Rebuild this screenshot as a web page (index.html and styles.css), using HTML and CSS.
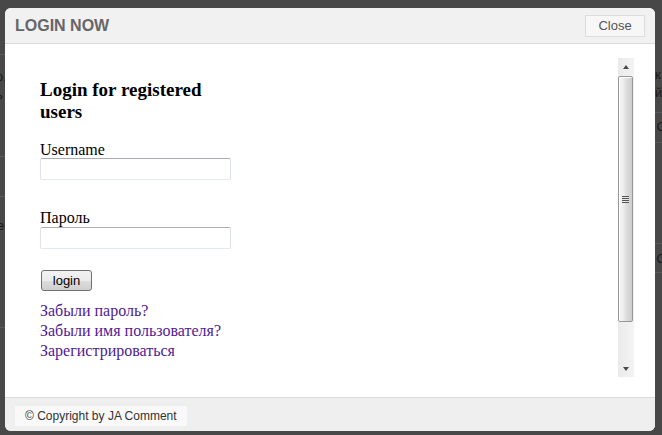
FILE: index.html
```html
<!DOCTYPE html>
<html lang="ru">
<head>
<meta charset="utf-8">
<title>Login now</title>
<link rel="stylesheet" href="styles.css">
</head>
<body>
<div class="page">
  <div class="page-col">
    <div class="prow prow-a"></div>
    <div class="ptext ptext-left">о,<br>ь</div>
    <div class="prow prow-b"></div>
    <div class="prow prow-c"></div>
    <div class="ptext ptext-left2">е</div>
    <div class="prow prow-d"></div>
  </div>
  <div class="page-col">
    <div class="prow prow-e"></div>
    <div class="ptext ptext-right">к<br>й"</div>
    <div class="prow prow-f"></div>
    <div class="ptext ptext-right2">C</div>
    <div class="prow prow-g"></div>
    <div class="prow prow-h"></div>
    <div class="ptext ptext-right3">C</div>
    <div class="prow prow-i"></div>
  </div>
</div>

<div class="modal">
  <div class="modal-header">
    <h2 class="modal-title">LOGIN NOW</h2>
    <button class="close-btn" type="button">Close</button>
  </div>
  <div class="modal-body">
    <div class="frame">
      <div class="frame-content">
        <h3 class="login-title">Login for registered users</h3>
        <form class="login-form">
          <label class="field-label" for="u">Username</label>
          <input class="field-input" id="u" type="text">
          <label class="field-label field-label-2" for="p">Пароль</label>
          <input class="field-input field-input-2" id="p" type="password">
          <button class="login-btn" type="button">login</button>
        </form>
        <ul class="links">
          <li><a href="#r">Забыли пароль?</a></li>
          <li><a href="#r">Забыли имя пользователя?</a></li>
          <li><a href="#r">Зарегистрироваться</a></li>
        </ul>
      </div>
      <div class="scrollbar">
        <div class="sb-btn sb-up"><span class="tri-up"></span></div>
        <div class="sb-thumb"><span class="grip"></span></div>
        <div class="sb-track"></div>
        <div class="sb-btn sb-down"><span class="tri-down"></span></div>
      </div>
    </div>
  </div>
  <div class="modal-footer">
    <span class="copyright">© Copyright by JA Comment</span>
  </div>
</div>
</body>
</html>
```

FILE: styles.css
```css
html, body {
  margin: 0;
  padding: 0;
}
body {
  width: 662px;
  height: 435px;
  overflow: hidden;
  background: #484848;
  font-family: "Liberation Serif", "Times New Roman", serif;
  position: relative;
}

/* faint page behind the overlay */
.page {
  display: grid;
  grid-template-columns: 331px 331px;
  height: 435px;
  font-family: "Liberation Sans", Arial, sans-serif;
  font-size: 13px;
  color: #1b1b1b;
}
.page-col {
  display: flex;
  flex-direction: column;
  overflow: hidden;
}
.prow { border-bottom: 1px solid #595959; }
.prow-a { height: 54px; }
.prow-b { height: 52px; }
.prow-c { height: 39px; }
.prow-d { height: 92px; }
.ptext { line-height: 18px; white-space: nowrap; }
.ptext-left { margin: 13px 0 0 -4px; }
.ptext-left2 { margin: 20px 0 0 -3px; }
.page-col:last-child { align-items: flex-end; }
.prow-e { height: 66px; width: 100%; border-bottom: none; }
.ptext-right { text-align: left; margin-right: -2px; width: 9px; }
.prow-f { height: 10px; width: 100%; }
.ptext-right2 { margin-right: -4px; margin-top: 5px; }
.prow-g { height: 6px; width: 100%; }
.prow-h { height: 100px; width: 100%; }
.ptext-right3 { margin-right: -4px; margin-top: 6px; }
.prow-i { height: 4px; width: 100%; }

/* modal dialog over the page */
.modal {
  position: absolute;
  left: 5px;
  top: 8px;
  width: 650px;
  height: 423px;
  background: #ffffff;
  border-radius: 6px;
  overflow: hidden;
  display: flex;
  flex-direction: column;
}
.modal-header {
  height: 35px;
  flex: none;
  background: #f1f1f1;
  border-bottom: 1px solid #d9d9d9;
  display: flex;
  align-items: center;
  justify-content: space-between;
  padding: 0 10px;
}
.modal-title {
  margin: 0;
  font-family: "Liberation Sans", Arial, sans-serif;
  font-size: 16px;
  font-weight: bold;
  color: #666666;
  line-height: 18px;
}
.close-btn {
  width: 60px;
  height: 22px;
  margin: 0;
  padding: 0;
  background: #f7f7f7;
  border: 1px solid #dddddd;
  border-radius: 0;
  font-family: "Liberation Sans", Arial, sans-serif;
  font-size: 13px;
  color: #555555;
}

.modal-body {
  flex: none;
  height: 319px;
  padding: 14px 21px 20px 15px;
  display: flex;
}
.frame {
  flex: 1;
  display: flex;
}
.frame-content {
  flex: 1;
  padding-left: 20px;
}
.login-title {
  margin: 21px 0 0;
  width: 191px;
  font-size: 19px;
  line-height: 22px;
  font-weight: bold;
  color: #000;
}
.login-form {
  display: flex;
  flex-direction: column;
  align-items: flex-start;
}
.field-label {
  margin-top: 18px;
  font-size: 16px;
  line-height: 17px;
  color: #000;
}
.field-label-2 { margin-top: 29px; }
.field-input {
  box-sizing: border-box;
  width: 191px;
  height: 22px;
  margin: 0;
  border: 1px solid;
  border-color: #abadb3 #dbdfe6 #e3e9ef #e2e3ea;
  border-radius: 2px;
  background: #fff;
}
.field-input-2 { margin-top: 1px; }
.login-btn {
  box-sizing: border-box;
  margin: 21px 0 0 1px;
  width: 51px;
  height: 21px;
  padding: 0;
  border: 1px solid #707070;
  border-radius: 3px;
  background: linear-gradient(#f2f2f2 0%, #ebebeb 50%, #dddddd 51%, #cfcfcf 100%);
  font-family: "Liberation Sans", Arial, sans-serif;
  font-size: 13px;
  color: #000;
}
.links {
  list-style: none;
  margin: 10px 0 0;
  padding: 0;
  font-size: 16px;
  line-height: 20px;
}
.links a {
  color: #4f1a94;
  text-decoration: none;
}

/* drawn scrollbar */
.scrollbar {
  width: 16px;
  display: flex;
  flex-direction: column;
  background: #f0f0f0;
}
.sb-btn {
  height: 18px;
  flex: none;
  display: flex;
  align-items: center;
  justify-content: center;
  background: linear-gradient(to right, #eaeaea, #f3f3f3);
}
.sb-down { height: 17px; }
.tri-up, .tri-down {
  width: 0;
  height: 0;
  border-left: 3.5px solid transparent;
  border-right: 3.5px solid transparent;
}
.tri-up { border-bottom: 4px solid #4a4a4a; }
.tri-down { border-top: 4px solid #4a4a4a; }
.sb-thumb {
  box-sizing: border-box;
  height: 246px;
  flex: none;
  margin: 0 1px 0 0;
  border: 1px solid #979797;
  border-radius: 2px;
  background: linear-gradient(to right, #f6f6f6 0%, #ececec 35%, #dcdcdc 60%, #cdcdcd 100%);
  box-shadow: inset 1px 1px 0 #ffffff;
  display: flex;
  align-items: center;
  justify-content: center;
}
.grip {
  width: 7px;
  height: 7px;
  background: repeating-linear-gradient(#555 0 1px, #e8e8e8 1px 2px);
}
.sb-track {
  flex: 1;
  background: linear-gradient(to right, #ebebeb, #f4f4f4);
}

.modal-footer {
  flex: 1;
  background: #efefef;
  border-top: 1px solid #dadada;
  padding: 8px 10px 0;
  display: flex;
  align-items: flex-start;
}
.copyright {
  height: 20px;
  padding: 0 10px;
  background: #f9f9f9;
  font-family: "Liberation Sans", Arial, sans-serif;
  font-size: 12px;
  line-height: 20px;
  color: #333333;
}
```
